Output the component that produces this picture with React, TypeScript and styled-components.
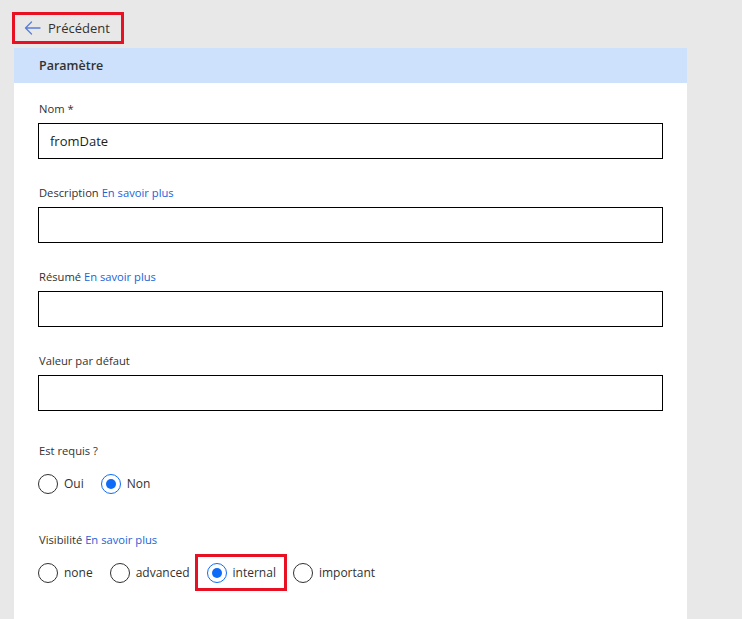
import styled, { createGlobalStyle, css } from "styled-components";

const GlobalStyle = createGlobalStyle`
  html, body {
    margin: 0;
    padding: 0;
    background: #e8e8e8;
    font-family: "Open Sans", "Noto Sans", sans-serif;
    color: #323130;
  }
`;

const fields = [
  { label: "Nom *", value: "fromDate" },
  { label: "Description", link: true, value: "" },
  { label: "Résumé", link: true, value: "" },
  { label: "Valeur par défaut", value: "" },
];

const visibility = ["none", "advanced", "internal", "important"];

const App = () => {
  return (
    <>
      <GlobalStyle />
      <Page>
        <TopBar>
          <BackButton>
            <svg width="17" height="14" viewBox="0 0 17 14" fill="none">
              <path
                d="M16 7H1.5M7.5 1L1.5 7l6 6"
                stroke="#5b7fd6"
                strokeWidth="1.3"
                strokeLinecap="round"
                strokeLinejoin="round"
              />
            </svg>
            <span>Précédent</span>
          </BackButton>
        </TopBar>
        <Panel>
          <PanelHeader>Paramètre</PanelHeader>
          <PanelBody>
            {fields.map((f) => (
              <Field key={f.label}>
                <Label>
                  {f.label}
                  {f.link && <LearnMore> En savoir plus</LearnMore>}
                </Label>
                <TextInput defaultValue={f.value} />
              </Field>
            ))}

            <Group $top={32}>
              <Label>Est requis ?</Label>
              <RadioRow>
                <Option>
                  <Circle />
                  Oui
                </Option>
                <Option>
                  <Circle $checked />
                  Non
                </Option>
              </RadioRow>
            </Group>

            <Group $top={38}>
              <Label>
                Visibilité<LearnMore> En savoir plus</LearnMore>
              </Label>
              <RadioRow>
                {visibility.map((v) => (
                  <Option key={v} $marked={v === "internal"}>
                    <Circle $checked={v === "internal"} />
                    {v}
                  </Option>
                ))}
              </RadioRow>
            </Group>
          </PanelBody>
        </Panel>
      </Page>
    </>
  );
};

const Page = styled.div`
  min-height: 619px;
  display: flex;
  flex-direction: column;
`;

const TopBar = styled.div`
  height: 48px;
  padding: 18px 0 0 24px;
  box-sizing: border-box;
  display: flex;
  align-items: flex-start;
`;

const BackButton = styled.button`
  position: relative;
  height: 20px;
  display: flex;
  align-items: center;
  gap: 7px;
  padding: 0;
  border: none;
  background: none;
  font-family: inherit;
  font-size: 13px;
  color: #323130;

  &::after {
    content: "";
    position: absolute;
    left: -12px;
    right: -14px;
    top: -6px;
    bottom: -6px;
    border: 3px solid #e81123;
  }
`;

const Panel = styled.section`
  flex: 1;
  width: 673px;
  margin-left: 14px;
  background: #fff;
`;

const PanelHeader = styled.div`
  height: 35px;
  background: #cde1fd;
  padding-left: 25px;
  display: flex;
  align-items: center;
  font-size: 12.5px;
  font-weight: 600;
  color: #323130;
`;

const PanelBody = styled.div`
  padding: 18px 24px 30px 24px;
`;

const Field = styled.div`
  display: flex;
  flex-direction: column;
  gap: 6px;
  & + & {
    margin-top: 26px;
  }
`;

const Label = styled.div`
  font-size: 11.2px;
  line-height: 16px;
  padding-left: 1px;
  color: #323130;
`;

const LearnMore = styled.span`
  color: #1a63d8;
`;

const TextInput = styled.input`
  width: 625px;
  height: 36px;
  box-sizing: border-box;
  border: 1.5px solid #000;
  border-radius: 0;
  padding: 0 11px;
  font-family: inherit;
  font-size: 13px;
  color: #201f1e;
  outline: none;
`;

const Group = styled.div<{ $top: number }>`
  margin-top: ${({ $top }) => $top}px;
  display: flex;
  flex-direction: column;
  gap: 15px;
`;

const RadioRow = styled.div`
  display: flex;
  align-items: center;
  gap: 17px;
`;

const Option = styled.label<{ $marked?: boolean }>`
  position: relative;
  display: flex;
  align-items: center;
  gap: 6px;
  font-size: 12px;
  line-height: 20px;
  color: #323130;

  ${({ $marked }) =>
    $marked &&
    css`
      &::after {
        content: "";
        position: absolute;
        left: -12px;
        right: -11px;
        top: -9px;
        bottom: -8px;
        border: 3px solid #e81123;
      }
    `}
`;

const Circle = styled.span<{ $checked?: boolean }>`
  width: 20px;
  height: 20px;
  box-sizing: border-box;
  border-radius: 50%;
  border: 1px solid ${({ $checked }) => ($checked ? "#0f6cf6" : "#323130")};
  display: flex;
  align-items: center;
  justify-content: center;

  &::before {
    content: "";
    width: 10px;
    height: 10px;
    border-radius: 50%;
    background: ${({ $checked }) => ($checked ? "#0f6cf6" : "transparent")};
  }
`;

export default App;
